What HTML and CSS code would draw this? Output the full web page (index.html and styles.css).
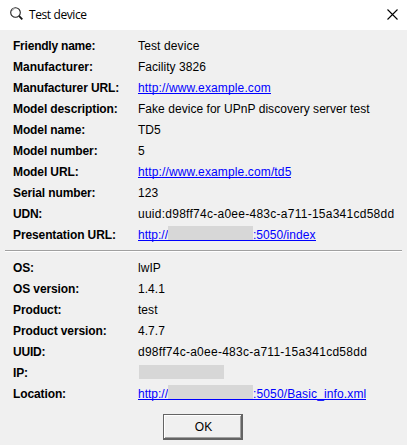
FILE: index.html
```
<!DOCTYPE html>
<html lang="en">
<head>
<meta charset="utf-8">
<title>Test device</title>
<link rel="stylesheet" href="styles.css">
</head>
<body>
<header class="titlebar">
  <svg class="search" width="14" height="14" viewBox="0 0 14 14"><circle cx="5.5" cy="5.5" r="4.8" fill="none" stroke="#222" stroke-width="1.1"/><path d="M9.2 9.2L12.3 12.3" stroke="#111" stroke-width="1.8"/><path d="M2 3.5L4 1.5" fill="none" stroke="#aaa" stroke-width="1.3"/></svg>
  <h1>Test device</h1>
  <svg class="close" width="11" height="11" viewBox="0 0 11 11"><path d="M.5 .5L10.5 10.5M10.5 .5L.5 10.5" stroke="#000" stroke-width="1.1"/></svg>
</header>
<main>
  <dl>
    <dt class="tight">Friendly name:</dt><dd class="loose">Test device</dd>
    <dt class="normal">Manufacturer:</dt><dd>Facility 3826</dd>
    <dt>Manufacturer URL:</dt><dd class="loose"><a>http://www.example.com</a></dd>
    <dt>Model description:</dt><dd>Fake device for UPnP discovery server test</dd>
    <dt>Model name:</dt><dd>TD5</dd>
    <dt>Model number:</dt><dd>5</dd>
    <dt>Model URL:</dt><dd class="loose"><a>http://www.example.com/td5</a></dd>
    <dt>Serial number:</dt><dd>123</dd>
    <dt class="tight">UDN:</dt><dd class="id">uuid:d98ff74c-a0ee-483c-a711-15a341cd58dd</dd>
    <dt>Presentation URL:</dt><dd><a><span class="scheme">http://</span><i class="mask"></i>:5050/index</a></dd>
  </dl>
  <hr>
  <dl>
    <dt>OS:</dt><dd>lwIP</dd>
    <dt>OS version:</dt><dd>1.4.1</dd>
    <dt>Product:</dt><dd>test</dd>
    <dt>Product version:</dt><dd>4.7.7</dd>
    <dt class="tight">UUID:</dt><dd class="id">d98ff74c-a0ee-483c-a711-15a341cd58dd</dd>
    <dt>IP:</dt><dd><i class="mask ip"></i></dd>
    <dt>Location:</dt><dd class="loose"><a><span class="scheme">http://</span><i class="mask"></i>:5050/Basic_info.xml</a></dd>
  </dl>
  <button>OK</button>
</main>
</body>
</html>
```
FILE: styles.css
```
* { box-sizing: border-box; }
html { background: #f0f0f0; }
body { margin: 0; width: 407px; height: 446px; background: #f0f0f0; border-bottom: 1px solid #fff; color: #000; font: 12px/23px "Liberation Sans", Arial, sans-serif; overflow: hidden; }
.titlebar { display: flex; align-items: flex-start; height: 30px; background: #fff; }
.search { margin: 7px 0 0 10px; }
h1 { margin: 4px 0 0 5px; font: 12px/21px "Open Sans", sans-serif; flex: 1; letter-spacing: -.4px; }
.close { margin: 9px 9px 0 0; }
main { padding: 5px 5px 0; display: flex; flex-direction: column; }
dl { display: grid; grid-template-columns: 125px 1fr; grid-auto-rows: 21px; margin: 0 0 0 8px; }
dt { font-weight: bold; white-space: nowrap; letter-spacing: -.11px; }
dt.tight { letter-spacing: -.22px; }
dt.normal { letter-spacing: 0; }
dd { margin: 0; white-space: nowrap; display: flex; align-items: flex-start; letter-spacing: .04px; }
dd.loose { letter-spacing: .13px; }
dd.id { letter-spacing: .26px; }
a { display: flex; height: 17px; border-bottom: 1px solid #00f; color: #00f; }
.scheme { width: 30px; letter-spacing: 0; }
.mask { display: block; width: 85px; height: 14px; margin-top: 2px; background: #d7d7d7; }
.mask.ip { margin: 3px 0 0 1px; }
hr { width: 397px; height: 2px; margin: 5px 0; border: 0; border-top: 1px solid #a0a0a0; background: #fff; }
button { align-self: center; width: 80px; height: 26px; margin: 10px 1px 0 0; padding: 0 0 0 2px; background: #f0f0f0; border: solid #646464; border-width: 1px 2px 2px 1px; box-shadow: inset 1px 1px #fff, inset -1px -1px #a0a0a0; font: 12px "Liberation Sans", Arial, sans-serif; color: #000; }
```
